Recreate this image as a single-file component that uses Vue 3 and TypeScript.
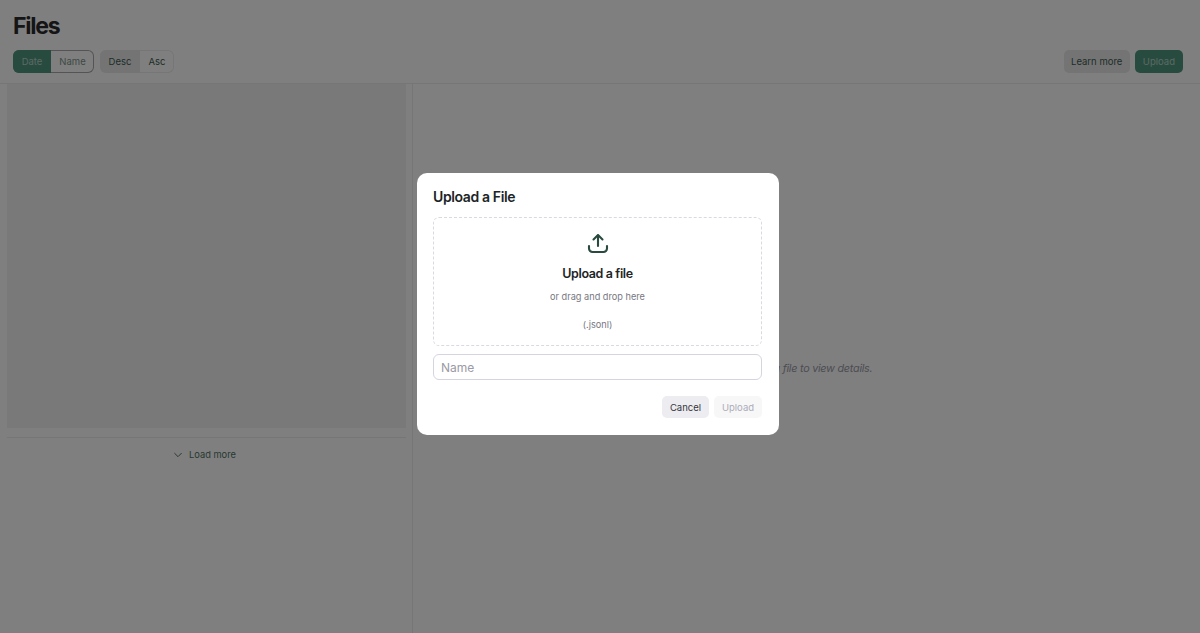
<template>
  <div class="page">
    <header class="header">
      <h1 class="title">Files</h1>
      <div class="toolbar">
        <div class="controls">
          <div class="segmented outlined">
            <button class="seg seg-green">Date</button>
            <button class="seg seg-name">Name</button>
          </div>
          <div class="segmented soft">
            <button class="seg seg-grey">Desc</button>
            <button class="seg">Asc</button>
          </div>
        </div>
        <div class="actions">
          <button class="btn btn-grey">Learn more</button>
          <button class="btn btn-green">Upload</button>
        </div>
      </div>
    </header>

    <main class="body">
      <section class="list-pane">
        <div class="skeleton"></div>
        <div class="load-row">
          <button class="load-more">
            <svg width="10" height="10" viewBox="0 0 12 12" fill="none" stroke="currentColor" stroke-width="1.2" stroke-linecap="round" stroke-linejoin="round">
              <path d="M2 4 6 8l4-4" />
            </svg>
            Load more
          </button>
        </div>
      </section>
      <section class="detail-pane">
        <p class="hint">Select a file to view details.</p>
      </section>
    </main>

    <div class="overlay">
      <div class="modal">
        <h2 class="modal-title">Upload a File</h2>
        <div class="dropzone">
          <svg class="upload-icon" width="24" height="24" viewBox="0 0 24 24" fill="none" stroke="currentColor" stroke-width="2.1" stroke-linecap="round" stroke-linejoin="round">
            <path d="M12 15V4.500" />
            <path d="M7.500 8.500 12 4l4.500 4.500" />
            <path d="M3 15v2.500A3.500 3.500 0 0 0 6.500 21h11a3.500 3.500 0 0 0 3.500-3.500V15" />
          </svg>
          <div class="drop-title">Upload a file</div>
          <div class="drop-sub">or drag and drop here</div>
          <div class="drop-ext">(.jsonl)</div>
        </div>
        <input class="name-input" type="text" placeholder="Name" />
        <div class="modal-actions">
          <button class="btn btn-cancel">Cancel</button>
          <button class="btn btn-disabled">Upload</button>
        </div>
      </div>
    </div>
  </div>
</template>

<script setup lang="ts">
</script>

<style>
html,
body {
  margin: 0;
  background: #fff;
}
</style>

<style scoped>
.page {
  height: 633px;
  display: flex;
  flex-direction: column;
  font-family: Inter, "Liberation Sans", sans-serif;
  color: #202123;
  overflow: hidden;
}

button {
  font-family: inherit;
  border: none;
  cursor: pointer;
}

.header {
  padding: 13px 17px 10px 13px;
  border-bottom: 1px solid #ececf1;
}

.title {
  margin: 0 0 11px;
  font-size: 23px;
  line-height: 26px;
  font-weight: 700;
  letter-spacing: -1.2px;
  color: #2a2b2d;
}

.toolbar {
  display: flex;
  justify-content: space-between;
  align-items: center;
}

.controls,
.actions {
  display: flex;
  gap: 5px;
}

.controls {
  gap: 6px;
}

.segmented {
  display: flex;
  height: 23px;
  border-radius: 6px;
  overflow: hidden;
}

.outlined {
  box-shadow: inset 0 0 0 1px #a8a8ae;
}

.soft {
  box-shadow: inset 0 0 0 1px #ececee;
}

.seg {
  padding: 0;
  width: 40px;
  background: transparent;
  font-size: 9.500px;
  color: #3d5c50;
}

.seg + .seg {
  width: 34px;
}

.seg-green {
  width: 38px;
  background: #50977f;
  color: #b8d2c8;
}

.seg + .seg-name {
  width: 43px;
  color: #7a9488;
}

.seg-grey {
  background: #e9e9ea;
}

.btn {
  height: 23px;
  padding: 0 7.500px;
  border-radius: 5px;
  font-size: 9.500px;
}

.btn-grey {
  background: #e9e9ea;
  color: #3d5c50;
}

.btn-green {
  padding: 0 8px;
  background: #50977f;
  color: #b8d2c8;
}

.body {
  flex: 1;
  display: flex;
  min-height: 0;
}

.list-pane {
  width: 413px;
  box-sizing: border-box;
  padding: 0 6px 0 7px;
  border-right: 1px solid #ececf1;
}

.skeleton {
  height: 344px;
  background: #f3f3f5;
}

.load-row {
  margin-top: 9px;
  border-top: 1px solid #ececf1;
  display: flex;
  justify-content: center;
  padding-top: 10px;
}

.load-more {
  display: flex;
  align-items: center;
  gap: 6px;
  background: transparent;
  font-size: 9.300px;
  color: #4f7265;
  margin-left: -4px;
}

.detail-pane {
  flex: 1;
  display: flex;
  align-items: center;
  justify-content: center;
  padding-top: 19px;
}

.hint {
  margin: 0;
  font-size: 10.800px;
  letter-spacing: -0.25px;
  font-style: italic;
  color: #9a9aa6;
}

.overlay {
  position: fixed;
  inset: 0;
  background: rgba(0, 0, 0, 0.5);
  display: flex;
  align-items: center;
  justify-content: center;
  padding: 0 4px 25px 0;
  box-sizing: border-box;
}

.modal {
  width: 362px;
  height: 262px;
  box-sizing: border-box;
  padding: 15px 17px 17px 16px;
  background: #fff;
  border-radius: 10px;
}

.modal-title {
  margin: 0 0 12px;
  font-size: 14px;
  line-height: 17px;
  font-weight: 600;
  letter-spacing: -0.38px;
  color: #1c2526;
}

.dropzone {
  height: 129px;
  box-sizing: border-box;
  border: 1px dashed #d9d9e3;
  border-radius: 6px;
  display: flex;
  flex-direction: column;
  align-items: center;
  padding-top: 13px;
}

.upload-icon {
  color: #2a4a40;
}

.drop-title {
  margin-top: 11px;
  font-size: 12.500px;
  line-height: 16px;
  font-weight: 600;
  letter-spacing: -0.38px;
  color: #1c2526;
}

.drop-sub {
  margin-top: 9px;
  font-size: 9.200px;
  line-height: 12px;
  color: #77777f;
}

.drop-ext {
  margin-top: 16px;
  font-size: 9.200px;
  line-height: 12px;
  color: #77777f;
}

.name-input {
  display: block;
  width: 100%;
  height: 26px;
  box-sizing: border-box;
  margin-top: 8px;
  padding: 0 7px;
  border: 1px solid #d5d5e0;
  border-radius: 6px;
  outline: none;
  font-family: inherit;
  font-size: 12px;
}

.name-input::placeholder {
  color: #9a9aa5;
}

.modal-actions {
  display: flex;
  justify-content: flex-end;
  gap: 5px;
  margin-top: 16px;
}

.btn-cancel {
  width: 47px;
  padding: 0;
  height: 22px;
  background: #ececf1;
  color: #353740;
}

.btn-disabled {
  width: 48px;
  padding: 0;
  height: 22px;
  background: #f7f7f8;
  color: #acacb8;
}
</style>
